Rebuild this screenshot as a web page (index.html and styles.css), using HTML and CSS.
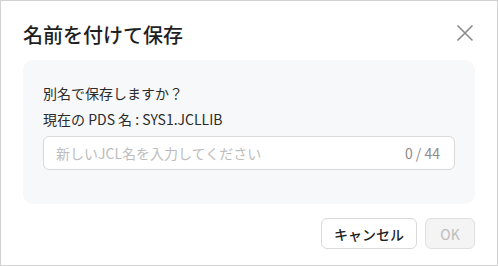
FILE: index.html
```html
<!DOCTYPE html>
<html lang="ja">
<head>
<meta charset="utf-8">
<link rel="stylesheet" href="styles.css">
</head>
<body>
<div class="dialog">
  <div class="header">
    <h1 class="title">名前を付けて保存</h1>
    <button class="close" aria-label="閉じる">
      <svg width="18" height="18" viewBox="0 0 18 18"><path d="M1.5 1.5 L16.5 16.5 M16.5 1.5 L1.5 16.5" stroke="#8a8a8a" stroke-width="1.6" fill="none"/></svg>
    </button>
  </div>
  <div class="panel">
    <p class="question">別名で保存しますか？</p>
    <p class="current">現在の PDS 名 : SYS1.JCLLIB</p>
    <div class="input">
      <span class="placeholder">新しいJCL名を入力してください</span>
      <span class="counter">0 / 44</span>
    </div>
  </div>
  <div class="footer">
    <button class="btn cancel">キャンセル</button>
    <button class="btn ok" disabled>OK</button>
  </div>
</div>
</body>
</html>
```

FILE: styles.css
```css
* { box-sizing: border-box; }
html, body { margin: 0; padding: 0; background: #ffffff; }
body {
  font-family: "Noto Sans CJK JP", "Noto Sans", sans-serif;
  color: #333333;
}
.dialog {
  width: 498px;
  height: 266px;
  border: 1px solid #d2d2d2;
  background: #ffffff;
  padding: 20px 22px 16px 22px;
  display: flex;
  flex-direction: column;
}
.header {
  display: flex;
  justify-content: space-between;
  align-items: flex-start;
  margin-bottom: 11px;
}
.title {
  margin: 0;
  font-size: 20px;
  line-height: 28px;
  font-weight: 500;
  color: #1f1f1f;
}
.close {
  border: 0;
  background: none;
  padding: 0;
  margin: 3px 1px 0 0;
  width: 18px;
  height: 18px;
  display: flex;
}
.panel {
  background: #f7f8fa;
  border-radius: 10px;
  padding: 22px 20px 34px 20px;
}
.question, .current {
  margin: 0;
  font-size: 14px;
  line-height: 22px;
  color: #2b2b2b;
}
.current { margin-top: 4px; }
.input {
  margin-top: 6px;
  height: 34px;
  background: #ffffff;
  border: 1px solid #d9d9d9;
  border-radius: 6px;
  padding: 0 14px 0 12px;
  display: flex;
  align-items: center;
  justify-content: space-between;
  font-size: 14px;
}
.placeholder { color: #bdbdbd; }
.counter { color: #8c8c8c; }
.footer {
  margin-top: 14px;
  display: flex;
  justify-content: flex-end;
  gap: 8px;
}
.btn {
  font-family: "Noto Sans CJK JP", "Noto Sans", sans-serif;
  font-size: 14px;
  height: 31px;
  border-radius: 6px;
  padding: 0 12px;
  line-height: 20px;
}
.cancel {
  background: #ffffff;
  border: 1px solid #d9d9d9;
  color: #1f1f1f;
  font-weight: 500;
}
.ok {
  background: #f4f4f4;
  border: 1px solid #e0e0e0;
  color: #bdbdbd;
  width: 50px;
  padding: 0;
}
```
